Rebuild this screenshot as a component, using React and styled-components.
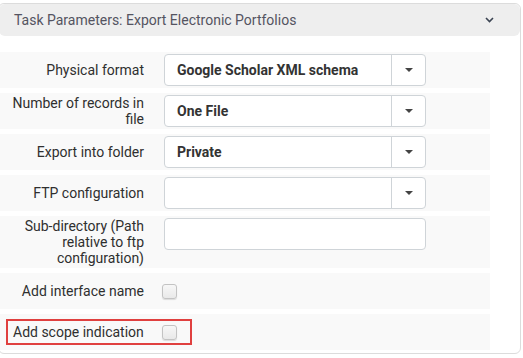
import styled, { createGlobalStyle } from "styled-components";

const GlobalStyle = createGlobalStyle`
    html, body {
        margin: 0;
        padding: 0;
        background: #ffffff;
        font-family: Roboto, "Liberation Sans", Arial, sans-serif;
    }
`

const Page = styled.div`
    width: 523px;
    height: 358px;
    padding-top: 3px;
    box-sizing: border-box;
    overflow: hidden;
`

const Panel = styled.div`
    width: 523px;
    margin-left: -2px;
    border: 1px solid #dcdcdc;
    border-radius: 6px;
    background: #ffffff;
    box-sizing: border-box;
`

const Header = styled.div`
    height: 32px;
    display: flex;
    align-items: center;
    justify-content: space-between;
    padding: 0 26px 0 15px;
    background: #eeeeee;
    border-radius: 6px;
    font-size: 14px;
    color: #545461;
`

const Body = styled.div`
    display: flex;
    flex-direction: column;
    gap: 5px;
    padding: 16px 30px 3px 0;
`

const Row = styled.div`
    display: flex;
    align-items: ${(p) => (p.$check ? "center" : "flex-start")};
    gap: ${(p) => (p.$check ? "18px" : "20px")};
    padding: 2px 0;
    background: #f9f9f9;
    min-height: 32px;
`

const Label = styled.div`
    width: ${(p) => (p.$fit ? "auto" : "139px")};
    min-height: ${(p) => (p.$check ? "auto" : "32px")};
    padding-left: ${(p) => (p.$fit ? "0" : "6px")};
    display: flex;
    align-items: center;
    justify-content: flex-end;
    text-align: right;
    font-size: 14px;
    line-height: 16px;
    color: #2f2f2f;
`

const Highlight = styled.div`
    display: flex;
    align-items: center;
    gap: 18px;
    margin-left: 7px;
    padding: 3px 13px 3px 5px;
    border: 2px solid #e0403f;
`

const SelectBox = styled.div`
    width: 262px;
    height: 32px;
    display: flex;
    border: 1px solid #cfd4d8;
    border-radius: 4px;
    background: #ffffff;
    box-sizing: border-box;
`

const SelectValue = styled.div`
    flex: 1;
    display: flex;
    align-items: center;
    padding-left: 12px;
    font-size: 14px;
    font-weight: 700;
    color: #333333;
`

const Toggle = styled.div`
    width: 33px;
    display: flex;
    align-items: center;
    justify-content: center;
    border-left: 1px solid #cfd4d8;
`

const Caret = styled.span`
    width: 0;
    height: 0;
    border-left: 4px solid transparent;
    border-right: 4px solid transparent;
    border-top: 4px solid #444444;
`

const TextInput = styled.div`
    width: 262px;
    height: 32px;
    border: 1px solid #cfd4d8;
    border-radius: 4px;
    background: #ffffff;
    box-sizing: border-box;
`

const Checkbox = styled.span`
    width: 15px;
    height: 15px;
    border: 1px solid #c3c3c3;
    border-radius: 3px;
    background: linear-gradient(#f7f7f7, #e9e9e9);
    box-shadow: 0 1px 1px rgba(0, 0, 0, 0.12);
    box-sizing: border-box;
`

const Chevron = () => (
    <svg width="9" height="6" viewBox="0 0 9 6">
        <path d="M1 1 L4.5 4.5 L8 1" fill="none" stroke="#3b4452" strokeWidth="1.6" />
    </svg>
)

const Select = ({ value }) => (
    <SelectBox>
        <SelectValue>{value}</SelectValue>
        <Toggle><Caret /></Toggle>
    </SelectBox>
)

const App = () => {
    return (
        <>
            <GlobalStyle />
            <Page>
                <Panel>
                    <Header>
                        <span>Task Parameters: Export Electronic Portfolios</span>
                        <Chevron />
                    </Header>
                    <Body>
                        <Row>
                            <Label>Physical format</Label>
                            <Select value="Google Scholar XML schema" />
                        </Row>
                        <Row>
                            <Label>Number of records in file</Label>
                            <Select value="One File" />
                        </Row>
                        <Row>
                            <Label>Export into folder</Label>
                            <Select value="Private" />
                        </Row>
                        <Row>
                            <Label>FTP configuration</Label>
                            <Select value="" />
                        </Row>
                        <Row>
                            <Label>Sub-directory (Path relative to ftp configuration)</Label>
                            <TextInput />
                        </Row>
                        <Row $check>
                            <Label $check>Add interface name</Label>
                            <Checkbox />
                        </Row>
                        <Row $check>
                            <Highlight>
                                <Label $check $fit>Add scope indication</Label>
                                <Checkbox />
                            </Highlight>
                        </Row>
                    </Body>
                </Panel>
            </Page>
        </>
    )
}

export default App;
